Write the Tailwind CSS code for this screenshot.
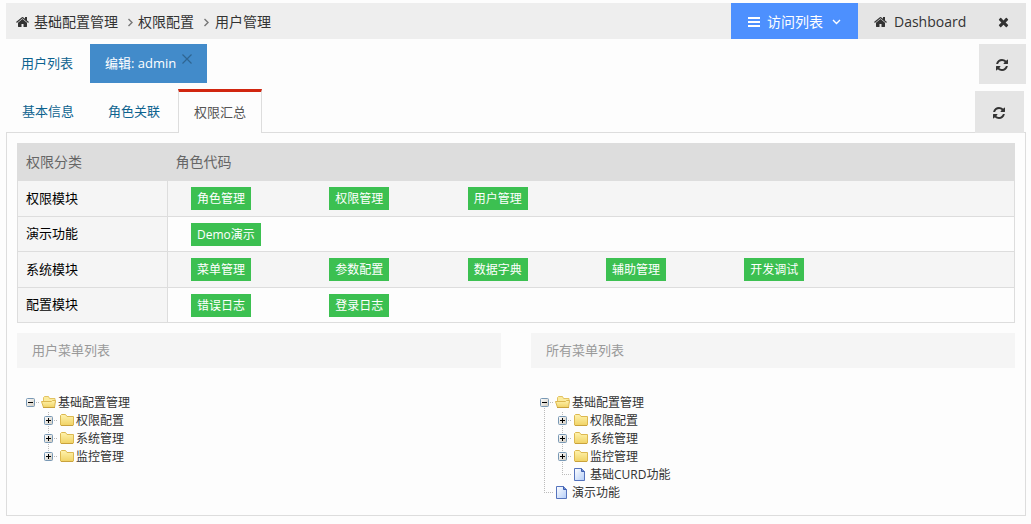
<!DOCTYPE html>
<html lang="zh-CN">
<head>
<meta charset="utf-8">
<meta name="viewport" content="width=device-width, initial-scale=1">
<title>用户管理</title>
<script src="https://cdn.jsdelivr.net/npm/@tailwindcss/browser@4"></script>
</head>
<body class="bg-[#fdfdfd] px-[6px] pt-[3px] pr-[5px] pb-[7px] font-['Open_Sans','Noto_Sans_CJK_SC',sans-serif] text-[13px] text-[#333]">

<svg class="absolute size-0" aria-hidden="true">
  <defs>
    <linearGradient id="fold" x1="0" y1="0" x2="0" y2="1"><stop offset="0" stop-color="#fff3ae"/><stop offset="1" stop-color="#f0d264"/></linearGradient>
    <linearGradient id="sheet" x1="0" y1="0" x2="1" y2="1"><stop offset="0" stop-color="#ffffff"/><stop offset="1" stop-color="#b3cdf8"/></linearGradient>
    <linearGradient id="box" x1="0" y1="0" x2="1" y2="1"><stop offset="0" stop-color="#ffffff"/><stop offset="1" stop-color="#cfcabf"/></linearGradient>
  </defs>
  <symbol id="home" viewBox="0 0 1664 1792"><path d="M1408 992v480q0 26-19 45t-45 19h-384v-384h-256v384h-384q-26 0-45-19t-19-45v-480q0-1 .5-3t.5-3l575-474 575 474q1 2 1 6zm223-69l-62 74q-8 9-21 11h-3q-13 0-21-7l-692-577-692 577q-12 8-24 7-13-2-21-11l-62-74q-8-10-7-23.500t11-21.500l719-599q32-26 76-26t76 26l244 204v-195q0-14 9-23t23-9h192q14 0 23 9t9 23v408l219 182q10 8 11 21.500t-7 23.500z"/></symbol>
  <symbol id="refresh" viewBox="0 0 1536 1792"><path d="M1511 1056q0 5-1 7-64 268-268 434.500t-478 166.500q-146 0-282.500-55t-243.500-157l-129 129q-19 19-45 19t-45-19-19-45v-448q0-26 19-45t45-19h448q26 0 45 19t19 45-19 45l-137 137q71 66 161 102t187 36q134 0 250-65t186-179q11-17 53-117 8-23 30-23h192q13 0 22.500 9.500t9.500 22.500zm25-800v448q0 26-19 45t-45 19h-448q-26 0-45-19t-19-45 19-45l138-138q-148-137-349-137-134 0-250 65t-186 179q-11 17-53 117-8 23-30 23h-199q-13 0-22.500-9.500t-9.500-22.500v-7q65-268 270-434.500t480-166.500q146 0 284 55.500t245 156.500l130-129q19-19 45-19t45 19 19 45z"/></symbol>
  <symbol id="times" viewBox="0 0 1408 1792"><path d="M1298 1322q0 40-28 68l-136 136q-28 28-68 28t-68-28l-294-294-294 294q-28 28-68 28t-68-28l-136-136q-28-28-28-68t28-68l294-294-294-294q-28-28-28-68t28-68l136-136q28-28 68-28t68 28l294 294 294-294q28-28 68-28t68 28l136 136q28 28 28 68t-28 68l-294 294 294 294q28 28 28 68z"/></symbol>
  <symbol id="right" viewBox="0 0 6 9"><path d="M1 1l3.500 3.500L1 8" fill="none" stroke="#777" stroke-width="1.400"/></symbol>
  <symbol id="minus" viewBox="0 0 18 18"><path d="M14 8.500h4" stroke="#bbb" stroke-dasharray="1 1"/><rect x="4.500" y="4.500" width="8" height="8" rx="1" fill="url(#box)" stroke="#7898b5"/><path d="M6 8.500h5" stroke="#000"/></symbol>
  <symbol id="plus" viewBox="0 0 18 18"><path d="M14 8.500h4M8.500 0v18" stroke="#bbb" stroke-dasharray="1 1"/><rect x="4.500" y="4.500" width="8" height="8" rx="1" fill="url(#box)" stroke="#7898b5"/><path d="M6 8.500h5M8.500 6v5" stroke="#000"/></symbol>
  <symbol id="plus-end" viewBox="0 0 18 18"><path d="M14 8.500h4M8.500 0v4" stroke="#bbb" stroke-dasharray="1 1"/><rect x="4.500" y="4.500" width="8" height="8" rx="1" fill="url(#box)" stroke="#7898b5"/><path d="M6 8.500h5M8.500 6v5" stroke="#000"/></symbol>
  <symbol id="minus-top" viewBox="0 0 18 18"><path d="M14 8.500h4M8.500 14v4" stroke="#bbb" stroke-dasharray="1 1"/><rect x="4.500" y="4.500" width="8" height="8" rx="1" fill="url(#box)" stroke="#7898b5"/><path d="M6 8.500h5" stroke="#000"/></symbol>
  <symbol id="vline" viewBox="0 0 18 18"><path d="M8.500 0v18" stroke="#bbb" stroke-dasharray="1 1"/></symbol>
  <symbol id="elbow" viewBox="0 0 18 18"><path d="M8.500 0v9M10 8.500h8" stroke="#bbb" stroke-dasharray="1 1"/></symbol>
  <symbol id="folder" viewBox="0 0 18 18"><path d="M2.500 13V3.500l1-1h4l1.500 2h6.500V13l-.5.500h-12z" fill="url(#fold)" stroke="#dcb850"/><path d="M3 13.500h12" stroke="#c9a23c"/></symbol>
  <symbol id="folder-open" viewBox="0 0 18 18"><path d="M3.500 9V3.500l1-1h4l1 2h5.500V9" fill="#fbeb9c" stroke="#e2c262"/><path d="M1.500 7.500h10l1-1h3l-1 7h-11z" fill="url(#fold)" stroke="#dcb850"/><path d="M3 13.500h12" stroke="#c9a23c"/></symbol>
  <symbol id="doc" viewBox="0 0 18 18"><path d="M2.500 2.500h7l3 3v9h-10z" fill="url(#sheet)" stroke="#5573bd"/><path d="M9.500 2.500v3h3" fill="#6f8fd6" stroke="#3d5cae"/></symbol>
</svg>

<header class="flex h-9 bg-[#eee] text-sm">
  <nav aria-label="面包屑" class="flex flex-1 items-center pt-[2px] pl-[10px]">
    <svg class="mr-[5px] h-[14px] w-[13px] fill-[#333]"><use href="#home"/></svg>
    <a href="#">基础配置管理</a>
    <svg class="mr-[4px] ml-[9px] h-[9px] w-[7px]"><use href="#right"/></svg>
    <a href="#">权限配置</a>
    <svg class="mr-[5px] ml-[9px] h-[9px] w-[7px]"><use href="#right"/></svg>
    <a href="#">用户管理</a>
  </nav>
  <button class="flex w-[127px] items-center bg-[#4d90fe] pt-[2px] pl-[17px] text-white">
    <svg class="mr-[7px] h-[10px] w-[12px]" viewBox="0 0 12 10"><path d="M0 1h12M0 5h12M0 9h12" stroke="#fff" stroke-width="2"/></svg>
    访问列表
    <svg class="ml-[9px] h-[6px] w-[9px]" viewBox="0 0 9 6"><path d="M1 1l3.500 3.500L8 1" fill="none" stroke="#fff" stroke-width="1.400"/></svg>
  </button>
  <a href="#" class="flex w-[122px] items-center bg-[#e5e5e5] pt-[2px] pl-4"><svg class="mr-[7px] h-[14px] w-[13px] fill-[#333]"><use href="#home"/></svg>Dashboard</a>
  <button aria-label="关闭" class="flex w-[46px] items-center bg-[#e5e5e5] pt-[2px] pl-[18px]"><svg class="h-[14px] w-[11px] fill-[#333]"><use href="#times"/></svg></button>
</header>

<div class="mt-[5px] flex h-10 items-start">
  <a href="#" class="flex h-[39px] items-center pr-[17px] pl-[15px] text-[#0d638f]">用户列表</a>
  <div class="flex h-[39px] w-[117px] bg-[#428bca] pl-[15px] text-white">
    <a href="#" class="flex items-center">编辑: admin</a>
    <button aria-label="关闭标签" class="mt-[10px] ml-[6px] flex size-[10px]"><svg class="size-[10px]" viewBox="0 0 10 10"><path d="M.5.500l9 9M9.500.500l-9 9" stroke="#2f6592" stroke-width="1.200"/></svg></button>
  </div>
  <button aria-label="刷新" class="ml-auto flex h-10 w-[47px] items-center justify-center bg-[#e5e5e5] pt-[2px] pr-[2px]"><svg class="h-[14px] w-[12px] fill-[#333]"><use href="#refresh"/></svg></button>
</div>

<div class="mt-[5px] flex h-11 items-end">
  <a href="#" class="flex h-11 items-center pt-[2px] pr-[17px] pl-4 text-[#0d638f]">基本信息</a>
  <a href="#" class="flex h-11 items-center pt-[2px] pr-[18px] pl-[17px] text-[#0d638f]">角色关联</a>
  <a href="#" aria-current="page" class="z-10 flex h-11 items-center border-x border-t-[3px] border-x-[#ddd] border-t-[#d12610] bg-[#fdfdfd] px-[15px] text-[#555]">权限汇总</a>
  <button aria-label="刷新" class="mr-[2px] ml-auto flex h-[42px] w-[49px] items-center justify-center bg-[#e5e5e5] pt-[2px] pr-[2px]"><svg class="h-[14px] w-[12px] fill-[#333]"><use href="#refresh"/></svg></button>
</div>

<main class="-mt-px border border-[#ddd] px-[10px] pt-[10px] pb-[13px]">
  <table class="w-full border-collapse border border-[#ddd]">
    <thead><tr class="h-[37px] bg-[#ddd] text-left text-sm text-[#666]"><th class="w-[150px] px-2 font-normal">权限分类</th><th class="px-2 font-normal">角色代码</th></tr></thead>
    <tbody>
      <tr class="h-9 border-b border-[#ddd] bg-[#f5f5f5]"><th class="border-r border-[#ddd] bg-[#f5f5f5] px-2 text-left font-normal text-black">权限模块</th><td class="px-2"><div class="grid grid-cols-6 justify-items-start text-xs text-white *:ml-[15px] *:bg-[#3cc051] *:px-[6px] *:leading-[23px]"><span>角色管理</span><span>权限管理</span><span>用户管理</span></div></td></tr>
      <tr class="h-[35px] border-b border-[#ddd]"><th class="border-r border-[#ddd] bg-[#f5f5f5] px-2 text-left font-normal text-black">演示功能</th><td class="px-2"><div class="grid grid-cols-6 justify-items-start text-xs text-white *:ml-[15px] *:bg-[#3cc051] *:px-[6px] *:leading-[23px]"><span>Demo演示</span></div></td></tr>
      <tr class="h-9 border-b border-[#ddd] bg-[#f5f5f5]"><th class="border-r border-[#ddd] bg-[#f5f5f5] px-2 text-left font-normal text-black">系统模块</th><td class="px-2"><div class="grid grid-cols-6 justify-items-start text-xs text-white *:ml-[15px] *:bg-[#3cc051] *:px-[6px] *:leading-[23px]"><span>菜单管理</span><span>参数配置</span><span>数据字典</span><span>辅助管理</span><span>开发调试</span></div></td></tr>
      <tr class="h-[35px]"><th class="border-r border-[#ddd] bg-[#f5f5f5] px-2 text-left font-normal text-black">配置模块</th><td class="px-2"><div class="grid grid-cols-6 justify-items-start text-xs text-white *:ml-[15px] *:bg-[#3cc051] *:px-[6px] *:leading-[23px]"><span>错误日志</span><span>登录日志</span></div></td></tr>
    </tbody>
  </table>

  <div class="mt-[10px] grid grid-cols-2 gap-[30px]">
    <section>
      <h2 class="bg-[#f5f5f5] px-[15px] leading-[35px] text-[#999]">用户菜单列表</h2>
      <ul class="mt-[26px] ml-[5px] text-xs leading-[18px] [&_svg]:size-[18px] [&_svg]:shrink-0">
        <li><div class="flex"><button aria-label="收起"><svg><use href="#minus"/></svg></button><svg><use href="#folder-open"/></svg><a href="#">基础配置管理</a></div>
          <ul class="pl-[18px]">
            <li class="flex"><button aria-label="展开"><svg><use href="#plus"/></svg></button><svg><use href="#folder"/></svg><a href="#">权限配置</a></li>
            <li class="flex"><button aria-label="展开"><svg><use href="#plus"/></svg></button><svg><use href="#folder"/></svg><a href="#">系统管理</a></li>
            <li class="flex"><button aria-label="展开"><svg><use href="#plus-end"/></svg></button><svg><use href="#folder"/></svg><a href="#">监控管理</a></li>
          </ul>
        </li>
      </ul>
    </section>
    <section>
      <h2 class="bg-[#f5f5f5] px-[15px] leading-[35px] text-[#999]">所有菜单列表</h2>
      <ul class="mt-[26px] ml-[5px] text-xs leading-[18px] [&_svg]:size-[18px] [&_svg]:shrink-0">
        <li><div class="flex"><button aria-label="收起"><svg><use href="#minus-top"/></svg></button><svg><use href="#folder-open"/></svg><a href="#">基础配置管理</a></div>
          <ul>
            <li class="flex"><svg><use href="#vline"/></svg><button aria-label="展开"><svg><use href="#plus"/></svg></button><svg><use href="#folder"/></svg><a href="#">权限配置</a></li>
            <li class="flex"><svg><use href="#vline"/></svg><button aria-label="展开"><svg><use href="#plus"/></svg></button><svg><use href="#folder"/></svg><a href="#">系统管理</a></li>
            <li class="flex"><svg><use href="#vline"/></svg><button aria-label="展开"><svg><use href="#plus"/></svg></button><svg><use href="#folder"/></svg><a href="#">监控管理</a></li>
            <li class="flex"><svg><use href="#vline"/></svg><svg><use href="#elbow"/></svg><svg><use href="#doc"/></svg><a href="#">基础CURD功能</a></li>
          </ul>
        </li>
        <li class="flex"><svg><use href="#elbow"/></svg><svg><use href="#doc"/></svg><a href="#">演示功能</a></li>
      </ul>
    </section>
  </div>
</main>
</body>
</html>
